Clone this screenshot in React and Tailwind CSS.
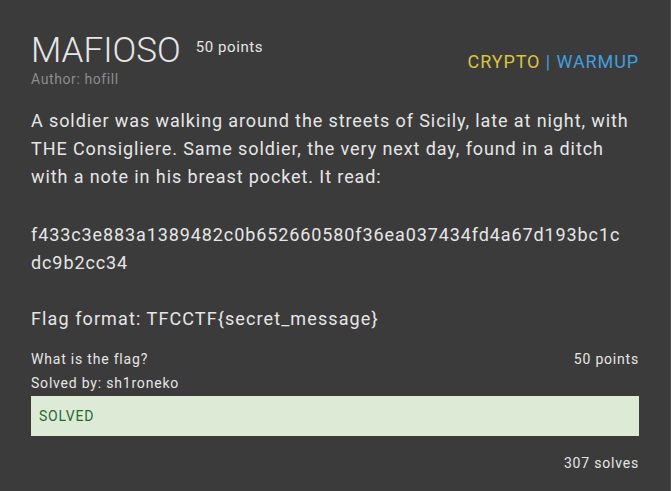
import React from "react";

const font = { fontFamily: "Roboto, 'Liberation Sans', sans-serif" };

const Challenge = () => {
  return (
    <div
      className="w-[671px] h-[491px] bg-[#3b3b3b] text-[#e6e6e6] border-r border-[#4a4a4a] px-[31px] pt-[28px] overflow-hidden"
      style={font}
    >
      {/* Header */}
      <div className="flex justify-between items-start">
        <div>
          <div className="flex items-start gap-[15px]">
            <h1 className="text-[35px] leading-[46px] font-light">MAFIOSO</h1>
            <span className="text-[15px] mt-[8px] tracking-[0.6px]">50 points</span>
          </div>
          <div className="text-[14px] leading-[16px] text-[#8c8c8c] -mt-[3px] tracking-[0.6px]">
            Author: hofill
          </div>
        </div>
        <div className="text-[18px] mt-[20px] tracking-[0.9px]">
          <span className="text-[#d9c43c]">CRYPTO</span>
          <span className="text-[#3f9fdf]"> | WARMUP</span>
        </div>
      </div>

      {/* Description */}
      <div className="mt-[20px] text-[18px] leading-[28px] tracking-[0.9px]">
        <p className="whitespace-nowrap">
          A soldier was walking around the streets of Sicily, late at night, with
          <br />
          THE Consigliere. Same soldier, the very next day, found in a ditch
          <br />
          with a note in his breast pocket. It read:
        </p>
        <p className="mt-[30px]">
          f433c3e883a1389482c0b652660580f36ea037434fd4a67d193bc1c
          <br />
          dc9b2cc34
        </p>
        <p className="mt-[28px] tracking-[1.1px]">Flag format: TFCCTF{"{"}secret_message{"}"}</p>
      </div>

      {/* Answer */}
      <div className="mt-[14px] text-[14px] leading-[24px] tracking-[0.8px]">
        <div className="flex justify-between">
          <span>What is the flag?</span>
          <span>50 points</span>
        </div>
        <div>Solved by: sh1roneko</div>
        <div className="mt-[1px] h-[40px] bg-[#ddebd6] text-[#1d6a31] px-[8px] flex items-center">
          SOLVED
        </div>
        <div className="mt-[15px] text-right">307 solves</div>
      </div>
    </div>
  );
};

export default function App() {
  return <Challenge />;
}
